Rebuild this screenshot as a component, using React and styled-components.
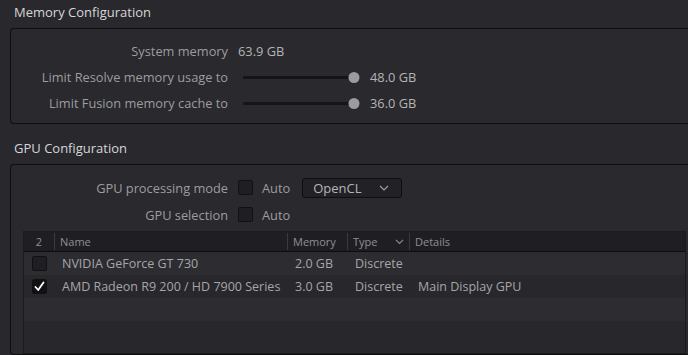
import React from "react";
import styled, { createGlobalStyle } from "styled-components";

const Global = createGlobalStyle`
  html, body { margin: 0; padding: 0; background: #28282d; }
  body { font-family: "Open Sans", "Noto Sans", sans-serif; font-size: 12.8px; overflow: hidden; }
`;

const Page = styled.div`
  width: 688px;
  height: 355px;
  display: flex;
  flex-direction: column;
  background: #28282d;
  overflow: hidden;
`;

const SectionTitle = styled.div`
  height: 28px;
  line-height: 25px;
  padding-left: 14px;
  font-size: 13px;
  color: #d6d6d8;
  margin-top: ${(p) => p.$top || 0}px;
`;

const Panel = styled.div`
  margin-left: 10px;
  border: 1px solid #0e0e11;
  border-right: none;
  border-radius: 4px 0 0 4px;
  background: #29292e;
  padding: ${(p) => p.$pad};
  display: flex;
  flex-direction: column;
  gap: ${(p) => p.$gap}px;
  flex: ${(p) => (p.$grow ? 1 : "none")};
`;

const Row = styled.div`
  display: grid;
  grid-template-columns: 217px auto;
  column-gap: 10px;
  align-items: center;
  height: ${(p) => p.$h}px;
`;

const Label = styled.div`
  text-align: right;
  color: #9d9d9f;
  white-space: nowrap;
`;

const Value = styled.div`
  color: #b4b4b6;
  white-space: nowrap;
`;

const Controls = styled.div`
  display: flex;
  align-items: center;
`;

const SliderWrap = styled.div`
  position: relative;
  width: 122px;
  height: 12px;
  margin-right: 10px;
`;

const Track = styled.div`
  position: absolute;
  left: 5px;
  right: 5px;
  top: 5px;
  height: 3px;
  border-radius: 2px;
  background: #151517;
`;

const Thumb = styled.div`
  position: absolute;
  top: 1px;
  width: 11px;
  height: 11px;
  border-radius: 50%;
  background: #9c9c9e;
  transform: translateX(-50%);
`;

const Box = styled.div`
  width: 13px;
  height: 13px;
  border: 1px solid #111114;
  border-radius: 2px;
  background: ${(p) => (p.$checked ? "#111113" : "#1f1f23")};
  display: flex;
  align-items: center;
  justify-content: center;
  flex: none;
`;

const AutoText = styled.span`
  color: #9d9d9f;
  margin-left: 9px;
`;

const Dropdown = styled.div`
  margin-left: 12px;
  width: 100px;
  height: 20px;
  border: 1px solid #0f0f12;
  border-radius: 3px;
  background: #222226;
  display: flex;
  align-items: center;
  justify-content: space-between;
  padding: 0 12px 0 10px;
  box-sizing: border-box;
  color: #b4b4b6;
  font-size: 13px;
`;

const Table = styled.div`
  margin: 0 2px 0 12px;
  border: 1px solid #1b1b1f;
  flex: 1;
  display: flex;
  flex-direction: column;
  background: #27272c;
`;

const cols = "30px 233px 60px 62px 1fr";

const Header = styled.div`
  display: grid;
  grid-template-columns: ${cols};
  height: 19px;
  background: #1f1f23;
  border-bottom: 1px solid #0c0c0e;
  color: #8f8f93;
  font-size: 11px;
`;

const HCell = styled.div`
  display: flex;
  align-items: center;
  justify-content: ${(p) => (p.$center ? "center" : "space-between")};
  padding: 0 ${(p) => (p.$center ? 0 : 5)}px;
  border-left: ${(p) => (p.$first ? "none" : "1px solid #3a3a40")};
  margin: 1px 0;
  white-space: nowrap;
`;

const BodyRow = styled.div`
  display: grid;
  grid-template-columns: ${cols};
  height: 23px;
  background: ${(p) => (p.$alt ? "#27272c" : "#2c2c31")};
  color: #a6a6a9;
  font-size: 12.5px;
`;

const Cell = styled.div`
  display: flex;
  align-items: center;
  justify-content: ${(p) => (p.$center ? "center" : "flex-start")};
  padding-left: ${(p) => (p.$center ? 0 : p.$pl || 8)}px;
  white-space: nowrap;
`;

const Chevron = ({ size = 10, color = "#a0a0a2" }) => (
  <svg width={size} height={size * 0.6} viewBox="0 0 10 6">
    <path d="M1 1 L5 5 L9 1" fill="none" stroke={color} strokeWidth="1.2" />
  </svg>
);

const Check = () => (
  <svg width="11" height="11" viewBox="0 0 11 11">
    <path d="M1.5 6 L4.2 9 L9.5 1.5" fill="none" stroke="#ffffff" strokeWidth="1.8" strokeLinecap="round" strokeLinejoin="round" />
  </svg>
);

function Slider({ pct }) {
  return (
    <SliderWrap>
      <Track />
      <Thumb style={{ left: `${5 + (pct / 100) * 111}px` }} />
    </SliderWrap>
  );
}

const gpus = [
  { name: "NVIDIA GeForce GT 730", mem: "2.0 GB", type: "Discrete", details: "", checked: false },
  { name: "AMD Radeon R9 200 / HD 7900 Series", mem: "3.0 GB", type: "Discrete", details: "Main Display GPU", checked: true },
  null,
  null,
];

export default function App() {
  return (
    <Page>
      <Global />
      <SectionTitle>Memory Configuration</SectionTitle>
      <Panel $pad="9px 0 8px 0" $gap={1}>
        <Row $h={25}>
          <Label>System memory</Label>
          <Value>63.9 GB</Value>
        </Row>
        <Row $h={25}>
          <Label>Limit Resolve memory usage to</Label>
          <Controls>
            <Slider pct={100} />
            <Value>48.0 GB</Value>
          </Controls>
        </Row>
        <Row $h={25}>
          <Label>Limit Fusion memory cache to</Label>
          <Controls>
            <Slider pct={100} />
            <Value>36.0 GB</Value>
          </Controls>
        </Row>
      </Panel>
      <SectionTitle $top={12}>GPU Configuration</SectionTitle>
      <Panel $pad="12px 0 0 0" $gap={6} $grow>
        <Row $h={21}>
          <Label>GPU processing mode</Label>
          <Controls>
            <Box />
            <AutoText>Auto</AutoText>
            <Dropdown>
              <span>OpenCL</span>
              <Chevron />
            </Dropdown>
          </Controls>
        </Row>
        <Row $h={21}>
          <Label>GPU selection</Label>
          <Controls>
            <Box />
            <AutoText>Auto</AutoText>
          </Controls>
        </Row>
        <Table>
          <Header>
            <HCell $first $center>2</HCell>
            <HCell>Name</HCell>
            <HCell>Memory</HCell>
            <HCell>
              Type
              <Chevron size={9} color="#8f8f93" />
            </HCell>
            <HCell>Details</HCell>
          </Header>
          {gpus.map((g, i) => (
            <BodyRow key={i} $alt={i % 2 === 1}>
              <Cell $center>
                {g && (
                  <Box $checked={g.checked}>{g.checked && <Check />}</Box>
                )}
              </Cell>
              <Cell>{g ? g.name : ""}</Cell>
              <Cell>{g ? g.mem : ""}</Cell>
              <Cell>{g ? g.type : ""}</Cell>
              <Cell $pl={9}>{g ? g.details : ""}</Cell>
            </BodyRow>
          ))}
        </Table>
      </Panel>
    </Page>
  );
}
